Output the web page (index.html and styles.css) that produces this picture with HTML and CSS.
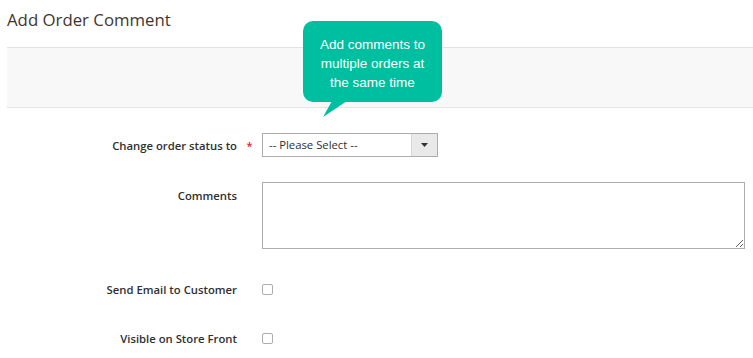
FILE: index.html
```html
<!DOCTYPE html>
<html lang="en">
<head>
<meta charset="utf-8">
<title>Add Order Comment</title>
<link rel="stylesheet" href="styles.css">
</head>
<body>
<h1 class="page-title">Add Order Comment</h1>
<div class="band"></div>
<div class="tooltip">
  <p class="tooltip-text">Add comments to<br>multiple orders at<br>the same time</p>
  <svg class="tooltip-tail" width="24" height="16" viewBox="0 0 24 16"><polygon points="9,0 24,0 0,16" fill="#00bfa0"/></svg>
</div>
<form class="form">
  <div class="row row-select">
    <label class="label">Change order status to</label>
    <span class="required">*</span>
    <div class="select">
      <span class="select-value">-- Please Select --</span>
      <span class="select-arrow"><svg width="7" height="4" viewBox="0 0 7 4"><polygon points="0,0 7,0 3.5,4" fill="#333"/></svg></span>
    </div>
  </div>
  <div class="row row-textarea">
    <label class="label label-top">Comments</label>
    <span class="spacer"></span>
    <textarea class="textarea"></textarea>
  </div>
  <div class="row row-check">
    <label class="label">Send Email to Customer</label>
    <span class="spacer"></span>
    <input type="checkbox" class="checkbox">
  </div>
  <div class="row row-check row-last">
    <label class="label">Visible on Store Front</label>
    <span class="spacer"></span>
    <input type="checkbox" class="checkbox">
  </div>
</form>
</body>
</html>
```
FILE: styles.css
```css
* { box-sizing: border-box; }
html, body { margin: 0; padding: 0; }
body {
  position: relative;
  width: 753px;
  height: 358px;
  overflow: hidden;
  background: #fff;
  font-family: "Open Sans", "Noto Sans", sans-serif;
  color: #303030;
}
.page-title {
  margin: 0;
  height: 47px;
  padding: 9px 0 0 7px;
  font-size: 16.8px;
  font-weight: 400;
  line-height: 1.362;
  color: #41362f;
}
.band {
  margin-left: 7px;
  height: 61px;
  background: #f8f8f8;
  border-top: 1px solid #e3e3e3;
  border-bottom: 1px solid #e3e3e3;
}
.tooltip {
  position: absolute;
  left: 303px;
  top: 21px;
  width: 139px;
  height: 81px;
  background: #00bfa0;
  border-radius: 10px;
}
.tooltip-text {
  margin: 0;
  padding-top: 14px;
  text-align: center;
  font-family: "Liberation Sans", Arial, sans-serif;
  font-size: 13.5px;
  line-height: 19px;
  color: #fff;
}
.tooltip-tail {
  position: absolute;
  left: 20px;
  top: 80px;
  display: block;
}
.form {
  padding-top: 25px;
}
.row {
  display: grid;
  grid-template-columns: 237px 25px auto;
  align-items: center;
}
.label {
  text-align: right;
  font-size: 11.3px;
  font-weight: 600;
  line-height: 15px;
  color: #303030;
}
.label-top { align-self: start; padding-top: 6px; }
.required {
  text-align: center;
  color: #e22626;
  font-size: 11px;
  font-weight: 600;
  line-height: 15px;
}
.row-select { margin-bottom: 25px; }
.row-textarea { margin-bottom: 28px; }
.row-check { height: 24px; margin-bottom: 25px; }
.row-last { margin-bottom: 0; }
.select {
  display: flex;
  width: 176px;
  height: 24px;
  border: 1px solid #adadad;
  background: #fff;
}
.select-value {
  flex: 1;
  padding-left: 6px;
  font-size: 11.3px;
  line-height: 22px;
  color: #303030;
}
.select-arrow {
  width: 26px;
  display: flex;
  align-items: center;
  justify-content: center;
  background: #e9e9e9;
  border-left: 1px solid #d6d6d6;
}
.select-arrow svg { display: block; }
.textarea {
  display: block;
  width: 483px;
  height: 67px;
  margin: 0;
  border: 1px solid #adadad;
  border-radius: 0;
  padding: 4px;
  font-family: "Open Sans", sans-serif;
  font-size: 11px;
  resize: both;
  background: #fff;
}
.checkbox {
  -webkit-appearance: none;
  appearance: none;
  display: block;
  width: 11px;
  height: 11px;
  margin: 0;
  border: 1px solid #adadad;
  border-radius: 2px;
  background: #fff;
}
```
